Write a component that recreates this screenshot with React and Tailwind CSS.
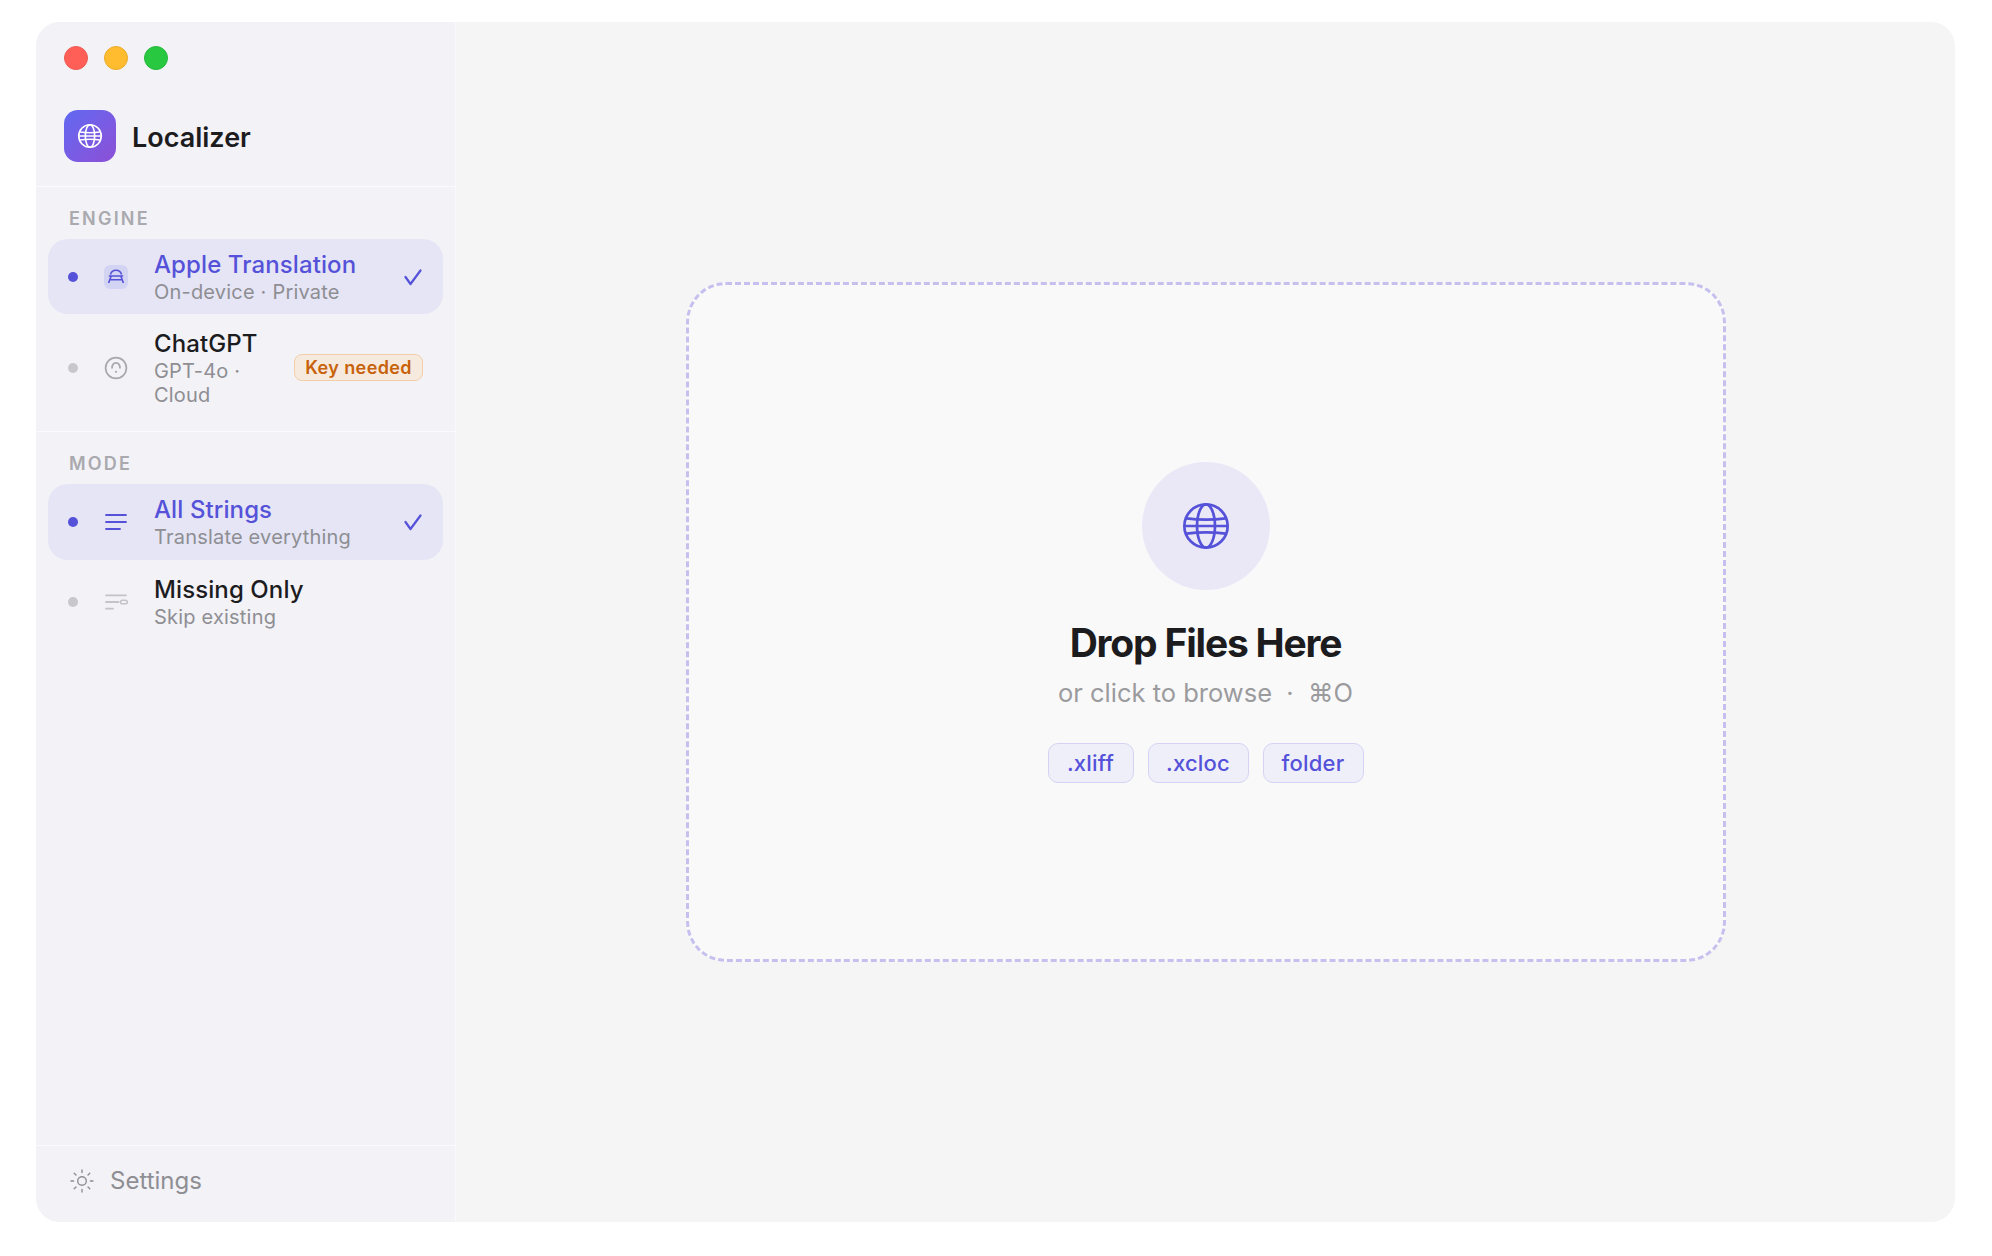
import React from 'react';

const rowTitle = "text-[24px] leading-[30px] font-medium tracking-[0.1px]";
const rowSub = "text-[20px] leading-[24.500px] tracking-[0.2px] text-[#8e8e93]";

function GlobeIcon({ className, strokeWidth = 1.5 }) {
  return (
    <svg viewBox="0 0 24 24" fill="none" stroke="currentColor" strokeWidth={strokeWidth} className={className}>
      <circle cx="12" cy="12" r="10.4" />
      <ellipse cx="12" cy="12" rx="4.3" ry="10.4" />
      <path d="M1.6 12h20.800M2.600 8.300Q12 9.600 21.400 8.300M2.600 15.700Q12 14.400 21.400 15.700" />
    </svg>
  );
}

function AppleIcon() {
  return (
    <div className="flex h-6 w-6 items-center justify-center rounded-[6px] bg-[#d3d4f3]">
      <svg viewBox="0 0 24 24" fill="none" stroke="#5552d9" strokeWidth="1.600" className="h-6 w-6">
        <path d="M6.500 9.500C7.200 6.600 9.300 5.200 12 5.200s4.800 1.400 5.500 4.300M4.800 11h14.400M7.200 11 4.600 18M16.800 11l2.600 7M5.800 14.800h12.400" />
      </svg>
    </div>
  );
}

function ChatIcon() {
  return (
    <svg viewBox="0 0 24 24" fill="none" stroke="#a9a9ad" strokeWidth="1.700" className="h-6 w-6">
      <circle cx="12" cy="12" r="10.400" />
      <path d="M8 12.500C8 8.500 10 6.800 12 6.800s4 1.700 4 5.700" />
      <circle cx="12" cy="15.800" r="1.100" fill="#a9a9ad" stroke="none" />
    </svg>
  );
}

function LinesIcon() {
  return (
    <svg viewBox="0 0 24 24" fill="none" stroke="#5552d9" strokeWidth="1.800" strokeLinecap="round" className="h-6 w-6">
      <path d="M2 5h20M2 12h20M2 19h14" />
    </svg>
  );
}

function MissingIcon() {
  return (
    <svg viewBox="0 0 24 24" fill="none" stroke="#c4c4c8" strokeWidth="1.800" strokeLinecap="round" className="h-6 w-6">
      <path d="M2 5.300h20M2 12h12.500M2 18.700h7" />
      <rect x="16.500" y="10.200" width="6.800" height="3.600" rx="1.800" strokeWidth="1.500" />
    </svg>
  );
}

function SunIcon() {
  return (
    <svg viewBox="0 0 24 24" fill="none" stroke="#8e8e93" strokeWidth="1.400" strokeLinecap="round" className="h-6 w-6">
      <circle cx="12" cy="12" r="4.300" />
      <path d="M12 1v2.600M12 20.400V23M1 12h2.600M20.400 12H23M4.200 4.200 6 6M18 18l1.800 1.800M4.200 19.800 6 18M18 6l1.800-1.800" />
    </svg>
  );
}

function Check() {
  return (
    <svg viewBox="0 0 16 16" fill="none" stroke="#5552d9" strokeWidth="2.200" strokeLinecap="round" strokeLinejoin="round" className="mr-[2px] h-4 w-4 translate-y-[1px] overflow-visible">
      <path d="M.5 8l5 7 10-13.500" />
    </svg>
  );
}

function Row({ active, tall, icon, title, sub, badge }) {
  return (
    <div className={`mx-3 flex items-center rounded-[20px] pl-5 pr-5 pt-[10px] ${tall ? "pb-[11px]" : "pb-[10px]"} ${active ? "bg-[#e5e5f5]" : ""}`}>
      <span className={`h-[10px] w-[10px] shrink-0 translate-y-[1px] rounded-full ${active ? "bg-[#5552d9]" : "bg-[#c8c8cc]"}`} />
      <div className="ml-[26px] h-6 w-6 shrink-0 translate-y-[1px]">{icon}</div>
      <div className="ml-[26px] min-w-0 flex-1 translate-y-[1px]">
        <div className={`${rowTitle} ${active ? "text-[#5552d9]" : "text-[#1c1c1e]"}`}>{title}</div>
        <div className={rowSub}>{sub}</div>
      </div>
      {active && <Check />}
      {badge && (
        <span className="ml-3 shrink-0 rounded-[8px] border border-[#f2cfa8] bg-[#f6e9de] px-[10px] text-[18px] leading-[25px] font-semibold tracking-[0.4px] text-[#c8620a]">
          {badge}
        </span>
      )}
    </div>
  );
}

function Label({ children }) {
  return (
    <div className="mb-2 pl-[33px] pt-5 text-[18px] leading-[24px] font-semibold tracking-[2.200px] text-[#a9a9ae]">
      {children}
    </div>
  );
}

function Pill({ width, children }) {
  return (
    <span className={`flex h-10 items-center justify-center rounded-[10px] border border-[#d5d3f3] bg-[#efeff9] pt-[2px] text-[22px] font-medium tracking-[0.2px] text-[#5552d9] ${width}`}>
      {children}
    </span>
  );
}

export default function App() {
  return (
    <div className="h-[1256px] w-[1992px] bg-white pl-9 pt-[22px] font-['Inter',sans-serif]">
      <div className="flex h-[1200px] w-[1919px] overflow-hidden rounded-[24px] bg-[#f5f5f6]">
        <aside className="flex w-[420px] shrink-0 flex-col border-r border-[#f9f9fb] bg-[#f2f2f7]">
          <div className="h-[165px] shrink-0 border-b border-[#fbfbfd] pl-7 pt-6">
            <div className="flex gap-4">
              <span className="h-6 w-6 rounded-full border border-[#ec5a52] bg-[#ff5f57]" />
              <span className="h-6 w-6 rounded-full border border-[#e9ac29] bg-[#febc2e]" />
              <span className="h-6 w-6 rounded-full border border-[#25b83b] bg-[#28c840]" />
            </div>
            <div className="mt-10 flex items-center gap-4">
              <div className="flex h-[52px] w-[52px] items-center justify-center rounded-[14px] bg-gradient-to-br from-[#5f68f2] to-[#8b4fd6] text-white">
                <GlobeIcon className="h-[26px] w-[26px]" />
              </div>
              <span className="pt-[4px] text-[27px] font-semibold text-[#1c1c1e]">Localizer</span>
            </div>
          </div>

          <div className="shrink-0 border-b border-[#fbfbfd] pb-[14.500px]">
            <Label>ENGINE</Label>
            <div className="flex flex-col gap-1">
              <Row active icon={<AppleIcon />} title="Apple Translation" sub="On-device · Private" />
              <Row icon={<ChatIcon />} title="ChatGPT" sub="GPT-4o · Cloud" badge="Key needed" />
            </div>
          </div>

          <div className="flex-1">
            <Label>MODE</Label>
            <div className="flex flex-col gap-1">
              <Row active tall icon={<LinesIcon />} title="All Strings" sub="Translate everything" />
              <Row tall icon={<MissingIcon />} title="Missing Only" sub="Skip existing" />
            </div>
          </div>

          <div className="flex h-[77px] shrink-0 items-center gap-4 border-t border-[#fbfbfd] pb-[6px] pl-[34px]">
            <SunIcon />
            <span className="text-[24px] text-[#8e8e93]">Settings</span>
          </div>
        </aside>

        <main className="flex flex-1 items-center justify-center">
          <div className="flex h-[680px] w-[1040px] flex-col items-center justify-center rounded-[40px] border-[3px] border-dashed border-[#c5c0ee] bg-[#f9f9fa]">
            <div className="flex h-32 w-32 items-center justify-center rounded-full bg-[#eae8f6] text-[#5552d9]">
              <GlobeIcon className="h-[50px] w-[50px]" strokeWidth={1.3} />
            </div>
            <h1 className="mt-[29px] text-[39px] leading-[48px] font-bold tracking-[-1.200px] text-[#1c1c1e]">Drop Files Here</h1>
            <p className="mt-[9px] text-[25.500px] leading-[34px] text-[#9b9b9e]">or click to browse &nbsp;·&nbsp; ⌘O</p>
            <div className="mt-[33px] flex gap-[14px]">
              <Pill width="w-[86px]">.xliff</Pill>
              <Pill width="w-[101px]">.xcloc</Pill>
              <Pill width="w-[101px]">folder</Pill>
            </div>
          </div>
        </main>
      </div>
    </div>
  );
}
